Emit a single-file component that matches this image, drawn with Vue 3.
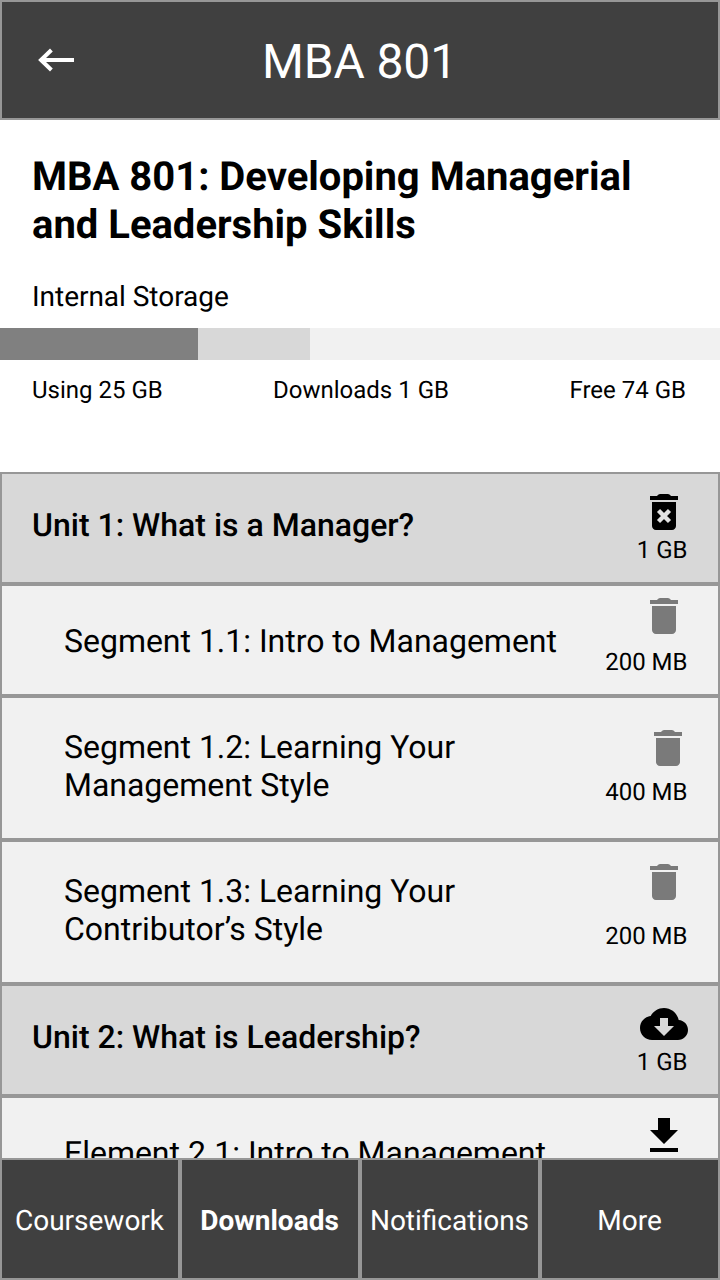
<script setup>
const rows = [
  { title: 'Unit 1: What is a Manager?', size: '1 GB', icon: 'remove', cls: 'unit' },
  { title: 'Segment 1.1: Intro to Management', size: '200 MB', icon: 'trash', cls: 'segment short' },
  { title: 'Segment 1.2: Learning Your Management Style', size: '400 MB', icon: 'trash', cls: 'segment tall inset' },
  { title: 'Segment 1.3: Learning Your Contributor’s Style', size: '200 MB', icon: 'trash', cls: 'segment tall spread' },
  { title: 'Unit 2: What is Leadership?', size: '1 GB', icon: 'cloud', cls: 'unit' },
  { title: 'Element 2.1: Intro to Management', icon: 'download', cls: 'segment short pending' }
]

const bin =
  'M6 19c0 1.1.9 2 2 2h8c1.1 0 2-.9 2-2V7H6v12zM19 4h-3.5l-.6-.6c-.3-.3-.6-.4-1-.4h-3.800c-.4 0-.7.1-1 .4l-.6.6H5v2h14V4z'

const icons = {
  remove: bin,
  trash: bin,
  cloud:
    'M19.35 10.04C18.67 6.59 15.64 4 12 4 9.11 4 6.6 5.64 5.35 8.04 2.34 8.36 0 10.91 0 14c0 3.31 2.69 6 6 6h13c2.76 0 5-2.24 5-5 0-2.64-2.05-4.78-4.65-4.96zM17 13l-5 5-5-5h3V9h4v4h3z',
  download: 'M19 9h-4V3H9v6H5l7 7 7-7zM5 18v2h14v-2H5z'
}

const tabs = ['Coursework', 'Downloads', 'Notifications', 'More']
const activeTab = 'Downloads'
</script>

<template>
  <div class="screen">
    <header class="topbar">
      <svg class="back" viewBox="0 0 40 24" aria-label="Back">
        <path d="M15.4 2 5 12l10.4 10M5 12h33" />
      </svg>
      <h1>MBA 801</h1>
    </header>

    <section class="summary">
      <h2>MBA 801: Developing Managerial and Leadership Skills</h2>
      <p class="storage">Internal Storage</p>
      <div class="meter">
        <div class="used"></div>
        <div class="downloaded"></div>
      </div>
      <div class="legend">
        <span>Using 25 GB</span>
        <span>Downloads 1 GB</span>
        <span>Free 74 GB</span>
      </div>
    </section>

    <main class="list">
      <div v-for="row in rows" :key="row.title" class="row" :class="row.cls">
        <div class="title">{{ row.title }}</div>
        <div class="action">
          <svg class="icon" :class="row.icon" viewBox="0 0 24 24">
            <path :d="icons[row.icon]" />
            <path v-if="row.icon === 'remove'" class="cross" d="m9.25 11.25 5.5 5.5m0-5.5-5.5 5.500" />
          </svg>
          <span v-if="row.size" class="size">{{ row.size }}</span>
        </div>
      </div>
    </main>

    <nav class="tabs">
      <div v-for="tab in tabs" :key="tab" class="tab" :class="{ active: tab === activeTab }">{{ tab }}</div>
    </nav>
  </div>
</template>

<style>
body {
  margin: 0;
  overflow: hidden;
}
</style>

<style scoped>
.screen,
.screen * {
  box-sizing: border-box;
}
.screen {
  width: 720px;
  height: 1280px;
  display: flex;
  flex-direction: column;
  overflow: hidden;
  background: #fff;
  color: #000;
  font-family: Roboto, "Liberation Sans", sans-serif;
  text-rendering: geometricPrecision;
}
.topbar {
  flex: none;
  height: 120px;
  border: 2px solid #979797;
  background: #404040;
  color: #fff;
  display: grid;
  grid-template-columns: 106px 1fr 107px;
  align-items: center;
}
.back {
  width: 40px;
  height: 24px;
  margin-left: 34px;
  fill: none;
  stroke: #fff;
  stroke-width: 4;
}
h1 {
  margin: 4px 0 0;
  text-align: center;
  font-size: 48px;
  line-height: 56px;
  font-weight: 400;
  letter-spacing: -0.12px;
}
.summary {
  flex: none;
  height: 352px;
  padding-top: 33px;
}
h2 {
  margin: 0 32px;
  font-size: 40px;
  line-height: 48px;
  font-weight: 700;
  letter-spacing: -0.01px;
}
.storage {
  margin: 32px 32px 0;
  font-size: 28px;
  line-height: 32px;
  letter-spacing: -0.03px;
}
.meter {
  display: flex;
  height: 32px;
  margin-top: 15px;
  background: #f1f1f1;
}
.used {
  width: 198px;
  background: #808080;
}
.downloaded {
  width: 112px;
  background: #d8d8d8;
}
.legend {
  display: grid;
  grid-template-columns: repeat(3, 1fr);
  padding: 16px 34px 0 32px;
  font-size: 24px;
  line-height: 28px;
}
.legend span:nth-child(2) {
  text-align: center;
  padding-left: 4px;
}
.legend span:last-child {
  text-align: right;
}
.list {
  flex: 1;
  min-height: 0;
  overflow: hidden;
}
.row {
  display: flex;
  justify-content: space-between;
  height: 112px;
  border: 2px solid #979797;
  padding: 0 30px;
}
.title {
  font-size: 32px;
  line-height: 38px;
}
.unit {
  background: #d8d8d8;
}
.unit .title {
  padding-top: 32px;
  font-weight: 500;
}
.segment {
  background: #f1f1f1;
  padding-left: 62px;
}
.segment .title {
  width: 510px;
  padding-top: 36px;
  letter-spacing: -0.02px;
}
.tall {
  height: 144px;
}
.tall .title {
  width: 420px;
  padding-top: 30px;
}
.action {
  display: flex;
  flex-direction: column;
  align-items: flex-end;
  padding-top: 14px;
  white-space: nowrap;
}
.short .action {
  padding-top: 6px;
  gap: 8px;
}
.inset .action {
  padding-top: 26px;
  gap: 6px;
}
.inset .icon {
  margin-right: -4px;
}
.spread .action {
  padding-top: 16px;
  gap: 16px;
}
.pending .action {
  padding-top: 14px;
}
.icon {
  flex: none;
  width: 48px;
  height: 48px;
  fill: #000;
}
.icon.trash {
  fill: #7a7a7a;
}
.cross {
  fill: none;
  stroke: #e2e2e2;
  stroke-width: 2.2;
}
.size {
  margin-right: 0.5px;
  font-size: 24px;
  line-height: 28px;
}
.tabs {
  flex: none;
  display: grid;
  grid-template-columns: repeat(4, 1fr);
  height: 122px;
}
.tab {
  display: flex;
  align-items: center;
  justify-content: center;
  border: 2px solid #979797;
  background: #404040;
  color: #fff;
  padding: 4px 1px 0 0;
  font-size: 28px;
  line-height: 32px;
}
.active {
  font-weight: 700;
}
</style>
